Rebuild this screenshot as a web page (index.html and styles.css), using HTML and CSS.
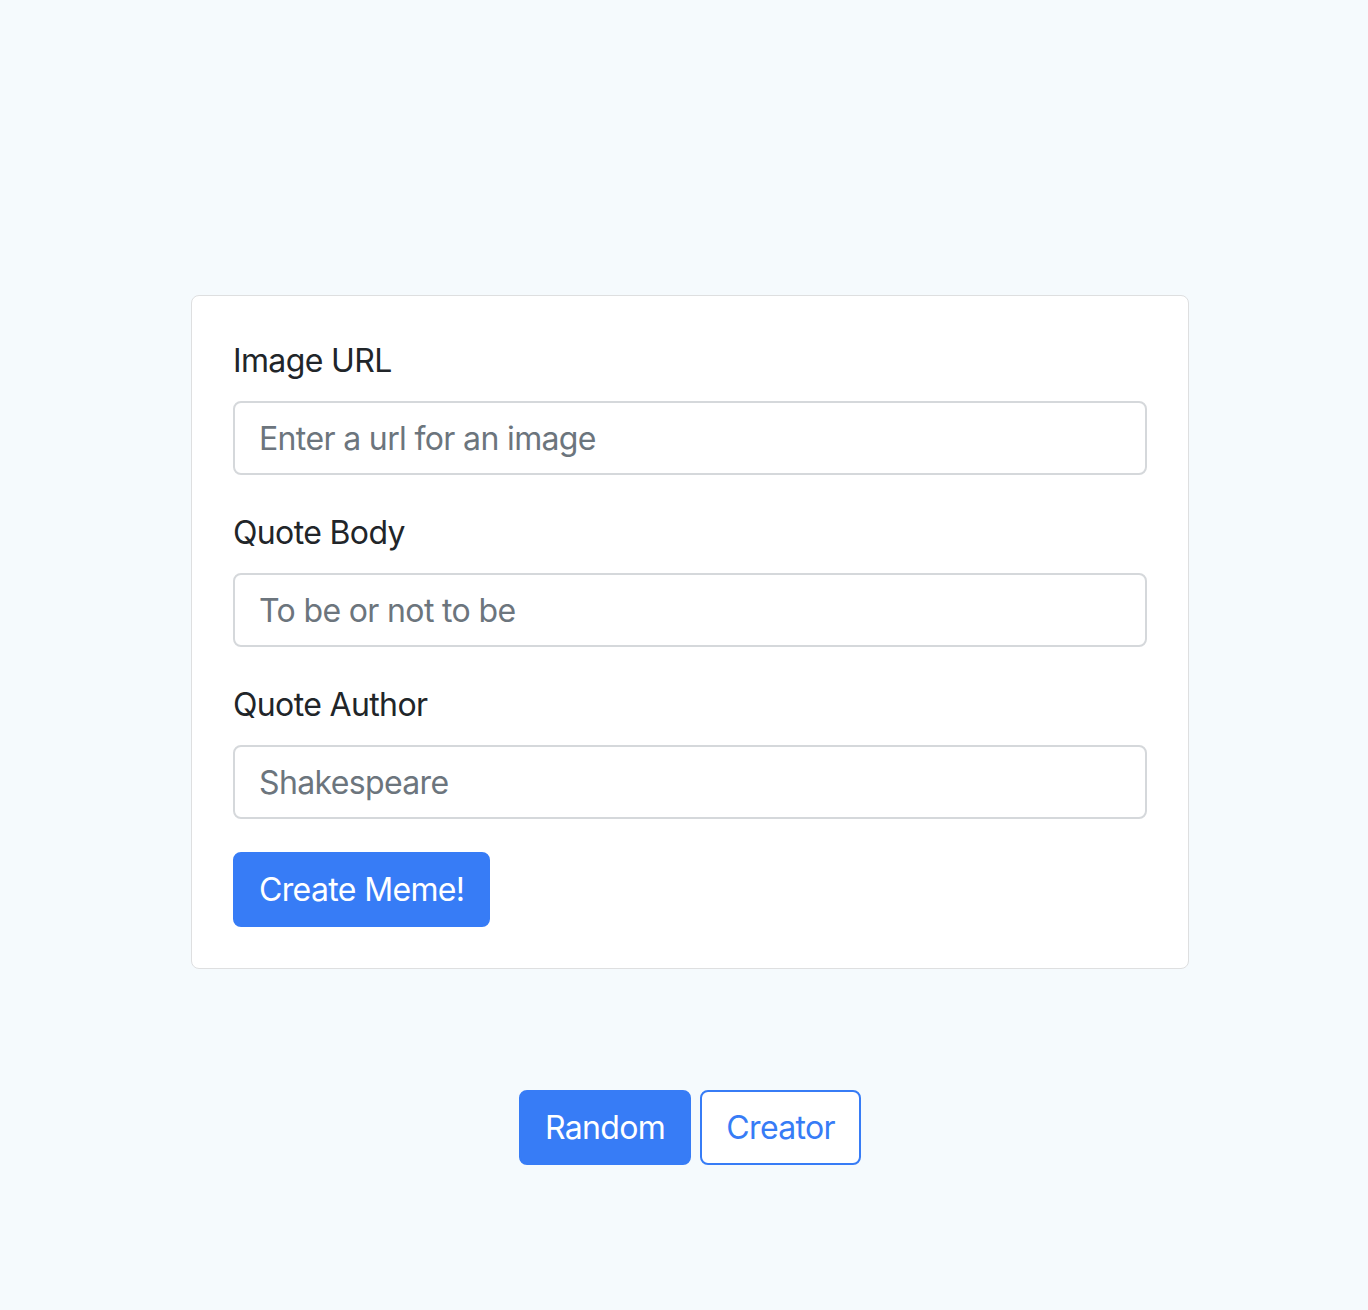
FILE: index.html
```html
<!DOCTYPE html>
<html lang="en">
<head>
<meta charset="utf-8">
<title>Meme Generator</title>
<link rel="stylesheet" href="styles.css">
</head>
<body>
<main class="container">
  <form class="card">
    <div class="form-group">
      <label class="form-label" for="url">Image URL</label>
      <input class="form-control" id="url" type="text" placeholder="Enter a url for an image">
    </div>
    <div class="form-group">
      <label class="form-label" for="body">Quote Body</label>
      <input class="form-control" id="body" type="text" placeholder="To be or not to be">
    </div>
    <div class="form-group">
      <label class="form-label" for="author">Quote Author</label>
      <input class="form-control" id="author" type="text" placeholder="Shakespeare">
    </div>
    <button class="btn btn-primary" type="button">Create Meme!</button>
  </form>
  <nav class="actions">
    <a class="btn btn-primary" href="#">Random</a>
    <a class="btn btn-outline" href="#">Creator</a>
  </nav>
</main>
</body>
</html>
```
FILE: styles.css
```css
* { box-sizing: border-box; }
html, body { margin: 0; padding: 0; }
body {
  background: #f5fafd;
  font-family: Inter, "Liberation Sans", sans-serif;
  font-size: 32px;
  line-height: 48px;
  letter-spacing: -0.02em;
  color: #212529;
  min-height: 1310px;
}
.container {
  width: 998px;
  margin-left: 191px;
  padding-top: 295px;
}
.card {
  display: flex;
  flex-direction: column;
  align-items: flex-start;
  background: #fff;
  border: 1px solid #dedfe0;
  border-radius: 8px;
  padding: 41px;
}
.form-group {
  width: 100%;
  display: flex;
  flex-direction: column;
  margin-bottom: 34px;
}
.form-group:nth-last-of-type(1) { margin-bottom: 33px; }
.form-label {
  margin-bottom: 16px;
}
.form-control {
  width: 100%;
  height: 74px;
  padding: 12px 24px;
  font: inherit;
  letter-spacing: -0.02em;
  color: #212529;
  background: #fff;
  border: 2px solid #d5d8db;
  border-radius: 8px;
  outline: none;
}
.form-control::placeholder { color: #6c757d; opacity: 1; }
.btn {
  display: inline-block;
  font: inherit;
  letter-spacing: -0.02em;
  height: 75px;
  padding: 12px 24px 11px;
  border-radius: 8px;
  border: 2px solid #377cf6;
  text-decoration: none;
  cursor: pointer;
}
.btn-primary {
  background: #377cf6;
  color: #fff;
}
.btn-outline {
  background: #fff;
  color: #377cf6;
}
.actions {
  display: flex;
  justify-content: center;
  gap: 9px;
  margin-top: 121px;
}
```
